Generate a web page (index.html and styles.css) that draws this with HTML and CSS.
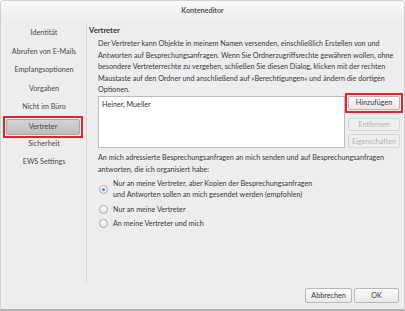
FILE: index.html
```html
<!DOCTYPE html>
<html>
<head>
  <title>Konteneditor</title>
  <link rel="stylesheet" href="styles.css">
</head>
<body>
  <div class="window">
    <div class="titlebar">Konteneditor</div>
    <div class="main">
      <ul class="sidebar">
        <li>Identität</li>
        <li>Abrufen von E-Mails</li>
        <li>Empfangsoptionen</li>
        <li>Vorgaben</li>
        <li>Nicht im Büro</li>
        <li class="active"><span class="mark"><span class="tab">Vertreter</span></span></li>
        <li>Sicherheit</li>
        <li>EWS Settings</li>
      </ul>
      <div class="content">
        <h2>Vertreter</h2>
        <div class="section">
          <p class="intro">
            Der Vertreter kann Objekte in meinem Namen versenden, einschließlich Erstellen von und<br>
            Antworten auf Besprechungsanfragen. Wenn Sie Ordnerzugriffsrechte gewähren wollen, ohne<br>
            besondere Vertreterrechte zu vergeben, schließen Sie diesen Dialog, klicken mit der rechten<br>
            Maustaste auf den Ordner und anschließend auf »Berechtigungen« und ändern die dortigen<br>
            Optionen.
          </p>
          <div class="delegates">
            <div class="list">Heiner, Mueller</div>
            <div class="actions">
              <span class="mark"><button class="btn">Hinzufügen</button></span>
              <button class="btn" disabled>Entfernen</button>
              <button class="btn" disabled>Eigenschaften</button>
            </div>
          </div>
          <p class="question">
            An mich adressierte Besprechungsanfragen an mich senden und auf Besprechungsanfragen<br>
            antworten, die ich organisiert habe:
          </p>
          <div class="options">
            <label class="option"><span class="radio checked"></span><span>Nur an meine Vertreter, aber Kopien der Besprechungsanfragen<br>und Antworten sollen an mich gesendet werden (empfohlen)</span></label>
            <label class="option"><span class="radio"></span><span>Nur an meine Vertreter</span></label>
            <label class="option"><span class="radio"></span><span>An meine Vertreter und mich</span></label>
          </div>
        </div>
      </div>
    </div>
    <div class="footer">
      <button class="btn">Abbrechen</button>
      <button class="btn ok">OK</button>
    </div>
  </div>
</body>
</html>
```
FILE: styles.css
```css
body {
    margin: 0;
    font-family: Lato, "Liberation Sans", sans-serif;
    font-size: 7.2px;
    color: #3a3a3a;
}

.window {
    width: 405px;
    height: 311px;
    box-sizing: border-box;
    background: #ededed;
    border: 1px solid #d2d2d2;
    border-bottom: 2px solid #b2b2b2;
    border-radius: 4px 4px 0 0;
    display: flex;
    flex-direction: column;
}

.titlebar {
    height: 19px;
    line-height: 19px;
    text-align: center;
    color: #555;
    font-weight: 700;
    background: linear-gradient(#fafafa, #ededed);
    border-radius: 4px 4px 0 0;
}

.main {
    display: flex;
    height: 263px;
}

.sidebar {
    list-style: none;
    margin: 4px 0 0;
    padding: 0 0 0 1px;
    width: 84px;
    flex-shrink: 0;
    border-right: 1px solid #d6d6d6;
}

.sidebar li {
    height: 18.6px;
    line-height: 18.6px;
    text-align: center;
    color: #4a4a4a;
    white-space: nowrap;
}

.mark {
    display: block;
    border: 2px solid #e4222a;
    padding: 1px;
}

.sidebar li.active .mark {
    margin: -1px 0 0 1px;
    width: 74px;
}

.tab {
    display: block;
    height: 14px;
    line-height: 14px;
    border: 1px solid #a8a8a8;
    border-radius: 2px;
    background: linear-gradient(#d4d4d4, #bcbcbc);
}

.content {
    flex: 1;
    padding: 3px 0 0 2px;
    white-space: nowrap;
}

h2 {
    margin: 0;
    font-size: 7.6px;
    font-weight: 700;
    color: #333;
    line-height: 14px;
}

.section {
    padding-left: 9px;
}

p {
    margin: 0;
    line-height: 11.6px;
}

.intro {
    margin-top: 1px;
}

.delegates {
    display: flex;
    height: 52px;
}

.list {
    width: 239px;
    height: 44px;
    background: #fff;
    border: 1px solid #bcbcbc;
    padding: 3px;
    color: #333;
}

.actions {
    display: flex;
    flex-direction: column;
    align-items: flex-start;
    margin: -3px 0 0 0;
    gap: 3px;
}

.actions .mark {
    margin-bottom: 2px;
}

.btn {
    font: inherit;
    width: 52px;
    height: 14px;
    padding: 0;
    border: 1px solid #b7b7b7;
    border-radius: 2px;
    background: linear-gradient(#fbfbfb, #e8e8e8);
    color: #3a3a3a;
    display: block;
}

.actions > .btn {
    margin-left: 3px;
}

.btn:disabled {
    border-color: #d6d6d6;
    background: #efefef;
    color: #b3b3b3;
}

.question {
    margin-top: 4px;
}

.options {
    margin-top: 3px;
}

.option {
    display: flex;
    align-items: center;
    gap: 5px;
    margin-left: 1px;
    margin-bottom: 3.5px;
    line-height: 11px;
}

.radio {
    width: 7px;
    height: 7px;
    border: 1px solid #a9a9a9;
    border-radius: 50%;
    background: linear-gradient(#fff, #e6e6e6);
    position: relative;
    flex-shrink: 0;
}

.radio.checked::after {
    content: "";
    position: absolute;
    left: 2px;
    top: 2px;
    width: 3px;
    height: 3px;
    border-radius: 50%;
    background: #4a7fd0;
}

.footer {
    display: flex;
    justify-content: flex-end;
    gap: 2px;
    padding: 5px 5px 0 0;
}

.footer .btn {
    width: 47px;
    height: 15px;
}

.footer .ok {
    width: 45px;
}
```
